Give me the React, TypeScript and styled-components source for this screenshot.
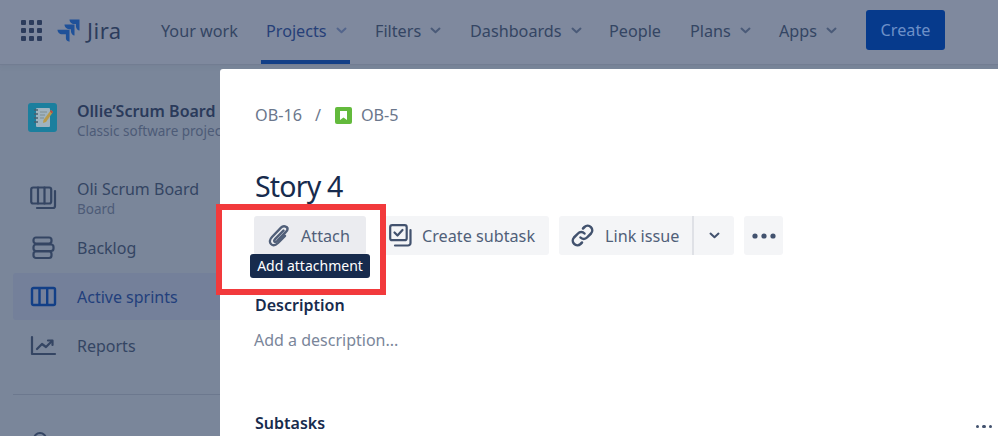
import React from "react";
import styled, { createGlobalStyle } from "styled-components";

const Global = createGlobalStyle`
  html, body { margin: 0; padding: 0; background: #7a869a; }
  * { box-sizing: border-box; }
`;

const Page = styled.div`
  position: relative;
  width: 998px;
  height: 436px;
  overflow: hidden;
  display: flex;
  flex-direction: column;
  font-family: "Noto Sans", "Open Sans", sans-serif;
  background: #7a869a;
`;

const Header = styled.header`
  height: 65px;
  flex: none;
  display: flex;
  align-items: flex-start;
  padding-left: 21px;
  background: #7f899e;
  border-bottom: 1px solid #727d92;
  box-shadow: 0 2px 3px #727d9266;
`;

const LogoRow = styled.div`
  display: flex;
  align-items: center;
  gap: 15px;
  width: 135px;
  height: 60px;
  flex: none;
`;

const Wordmark = styled.span`
  font-size: 22px;
  letter-spacing: 0.5px;
  color: #2c3c5c;
  margin-left: -8px;
`;

const Nav = styled.nav`
  display: flex;
  height: 64px;
  align-items: stretch;
`;

const NavItem = styled.div<{ $active?: boolean; $width: number }>`
  width: ${(p) => p.$width}px;
  padding: 1px 0 0 5px;
  display: flex;
  align-items: center;
  gap: 9px;
  font-size: 16.2px;
  white-space: nowrap;
  color: ${(p) => (p.$active ? "#263f78" : "#344563")};
  border-bottom: 4px solid ${(p) => (p.$active ? "#123f87" : "transparent")};
  margin-right: 20px;
`;

const CreateButton = styled.button`
  width: 79px;
  height: 40px;
  margin: 10px 0 0 5px;
  border: 0;
  border-radius: 3px;
  background: #063a8c;
  color: #6d90c8;
  font: 16.2px "Noto Sans", sans-serif;
`;

const Body = styled.div`
  flex: 1;
  display: flex;
  min-height: 0;
  padding-top: 4px;
`;

const Sidebar = styled.aside`
  width: 220px;
  flex: none;
  padding: 34px 0 0 13px;
  display: flex;
  flex-direction: column;
`;

const ProjectRow = styled.div`
  display: flex;
  align-items: flex-start;
  gap: 20px;
  padding-left: 15px;
  height: 29px;
  white-space: nowrap;
`;

const ProjectText = styled.div`
  display: flex;
  flex-direction: column;
  width: 143px;
  margin-top: -1px;
  overflow: hidden;
`;

const ProjectName = styled.div`
  font-size: 16px;
  line-height: 19px;
  font-weight: 600;
  color: #2a3a5a;
`;

const ProjectKind = styled.div`
  font-size: 13.5px;
  line-height: 20px;
  color: #4d5b77;
`;

const NavList = styled.div`
  margin-top: 41px;
  display: flex;
  flex-direction: column;
`;

const SideItem = styled.div<{ $active?: boolean; $height: number }>`
  height: ${(p) => p.$height}px;
  display: flex;
  align-items: center;
  gap: 20px;
  padding-left: 17px;
  color: ${(p) => (p.$active ? "#223f7c" : "#344563")};
  font-size: 16px;
  background: ${(p) => (p.$active ? "#74809a" : "transparent")};
  border-radius: 3px 0 0 3px;
`;

const SideStack = styled.div`
  display: flex;
  flex-direction: column;
`;

const SideLabel = styled.span`
  line-height: 22px;
`;

const SideSub = styled.span`
  font-size: 13.5px;
  line-height: 18px;
  color: #4d5b77;
`;

const SideDivider = styled.div`
  margin-top: 22px;
  height: 1px;
  background: #6c788e;
`;

const Modal = styled.main`
  flex: 1;
  background: #fff;
  border-radius: 3px 0 0 0;
  padding: 34px 0 0 35px;
  position: relative;
  display: flex;
  flex-direction: column;
`;

const Crumbs = styled.div`
  display: flex;
  align-items: center;
  font-size: 16.2px;
  height: 24px;
  color: #6b778c;
`;

const Slash = styled.span`
  margin: 0 14px 0 13px;
`;

const CrumbKey = styled.span`
  margin-left: 9px;
`;

const Title = styled.h1`
  margin: 39px 0 0;
  font-size: 28.5px;
  letter-spacing: -0.8px;
  line-height: 40px;
  font-weight: 400;
  color: #172b4d;
`;

const Actions = styled.div`
  display: flex;
  margin: 10px 0 0 -1px;
  height: 39px;
`;

const ActionButton = styled.div<{ $bg: string; $width: number; $gap?: number; $pad?: number; $after?: number }>`
  width: ${(p) => p.$width}px;
  height: 39px;
  background: ${(p) => p.$bg};
  border-radius: 3px;
  display: flex;
  align-items: center;
  justify-content: ${(p) => (p.$gap ? "flex-start" : "center")};
  padding-left: ${(p) => p.$pad ?? 0}px;
  gap: ${(p) => p.$gap ?? 0}px;
  font-size: 16.2px;
  color: #505f79;
  margin-right: ${(p) => p.$after ?? 10}px;
`;

const SplitLeft = styled(ActionButton)`
  margin-right: 0;
  border-radius: 3px 0 0 3px;
  border-right: 2px solid #dfe1e6;
`;

const SplitRight = styled(ActionButton)`
  border-radius: 0 3px 3px 0;
`;

const SectionTitle = styled.h2<{ $top: number }>`
  margin: ${(p) => p.$top}px 0 0;
  font-size: 16px;
  line-height: 22px;
  font-weight: 600;
  color: #172b4d;
`;

const Placeholder = styled.div`
  margin-top: 12px;
  margin-left: -1px;
  font-size: 16px;
  line-height: 24px;
  color: #7a869a;
`;

const Tooltip = styled.div`
  position: absolute;
  left: 250px;
  top: 254px;
  width: 120px;
  height: 24px;
  border-radius: 3px;
  background: #172b4d;
  color: #fff;
  font-size: 14px;
  line-height: 24px;
  text-align: center;
  white-space: nowrap;
`;

const Callout = styled.div`
  position: absolute;
  left: 216px;
  top: 204px;
  width: 170px;
  height: 91px;
  border: 6px solid #f23a3c;
  pointer-events: none;
`;

const Dots = styled.div`
  position: absolute;
  right: 6px;
  bottom: 8px;
  display: flex;
  gap: 3px;
`;

const Dot = styled.i`
  width: 3.5px;
  height: 3.5px;
  border-radius: 50%;
  background: #42526e;
`;

const PartialIcon = styled.div`
  position: absolute;
  left: 33px;
  top: 432px;
  width: 14px;
  height: 14px;
  border: 2px solid #344563;
  border-radius: 50%;
`;

const GridIcon = () => (
  <svg width="21" height="21" viewBox="0 0 21 21" fill="#2c3c5c">
    {[0, 8, 16].flatMap((y) =>
      [0, 8, 16].map((x) => <rect key={`${x}-${y}`} x={x} y={y} width="5" height="5" rx="1" />)
    )}
  </svg>
);

const JiraMark = () => (
  <svg width="23" height="23" viewBox="0 0 23 23" fill="#1f5199">
    <path d="M22.5 0.5H12.5c0 2.6 2.1 4.6 4.6 4.6h1.8v1.8c0 2.5 2 4.5 3.6 4.6z" />
    <path d="M17.5 5.6H7.5c0 2.6 2.1 4.6 4.6 4.6h1.8V12c0 2.5 2 4.5 3.6 4.6z" />
    <path d="M12.5 10.7H0.5c0 2.6 2.1 4.6 4.6 4.6h3.8v4c0 2.2 2 3.2 3.6 3.4z" />
  </svg>
);

const Chevron = ({ color = "#4a5a78", w = 11 }: { color?: string; w?: number }) => (
  <svg width={w} height={w * 0.65} viewBox="0 0 11 7" fill="none" stroke={color} strokeWidth="2" strokeLinecap="round" strokeLinejoin="round">
    <path d="M1.5 1.5 5.5 5.2 9.5 1.5" />
  </svg>
);

const ProjectAvatar = () => (
  <svg width="29" height="29" viewBox="0 0 29 29">
    <rect width="29" height="29" rx="3" fill="#1b7f9e" />
    <rect x="8" y="5" width="14" height="19" rx="1" fill="#9fb3bf" />
    <path d="M6 7h4M6 11h4M6 15h4M6 19h4" stroke="#49606f" strokeWidth="1.5" />
    <path d="M12 9h7M12 12h5M12 15h4" stroke="#7e8d8f" strokeWidth="1" />
    <path d="M23 7l2 2-7 10-3 1 .5-3z" fill="#b89a4a" />
    <path d="M23 7l2 2-1 1.500-2-2z" fill="#b5494a" />
  </svg>
);

const BoardIcon = ({ color = "#344563" }: { color?: string }) => (
  <svg width="27" height="24" viewBox="0 0 27 24" fill="none" stroke={color} strokeWidth="2.2" strokeLinejoin="round" strokeLinecap="round">
    <rect x="1.200" y="1.500" width="20" height="16" rx="2" />
    <path d="M8 1.500v16M14.500 1.500v16" />
    <path d="M25 5v15a2 2 0 0 1-2 2H7" />
  </svg>
);

const BacklogIcon = () => (
  <svg width="27" height="24" viewBox="0 0 27 24" fill="none" stroke="#344563" strokeWidth="2.2" strokeLinejoin="round">
    <rect x="3.500" y="1.500" width="18" height="6" rx="2.500" />
    <rect x="3.500" y="8.500" width="20" height="6.500" rx="2.500" />
    <rect x="3.500" y="15.500" width="18" height="6.500" rx="2.500" />
  </svg>
);

const SprintIcon = () => (
  <svg width="27" height="22" viewBox="0 0 27 22" fill="none" stroke="#123f87" strokeWidth="2.400" strokeLinejoin="round">
    <rect x="2" y="2" width="23" height="17" rx="1.500" />
    <path d="M9.500 2v17M17.200 2v17" />
  </svg>
);

const ReportsIcon = () => (
  <svg width="27" height="22" viewBox="0 0 27 22" fill="none" stroke="#344563" strokeWidth="2.200" strokeLinecap="round" strokeLinejoin="round">
    <path d="M2 2v17h23" />
    <path d="M7 14l5-5 4 3 6-6" />
    <path d="M18 5.500h4.500V10" />
  </svg>
);

const StoryIcon = () => (
  <svg width="17" height="17" viewBox="0 0 17 17">
    <rect width="17" height="17" rx="2" fill="#63ba3c" />
    <path d="M5 4h7v9l-3.500-2.500L5 13z" fill="#fff" />
  </svg>
);

const ClipIcon = () => (
  <svg width="22" height="24" viewBox="0 0 22 24" fill="none" stroke="#505f79" strokeWidth="2.400" strokeLinecap="round" strokeLinejoin="round">
    <path d="M19 3.500c-1.800-1.800-4.300-1.500-6 .2L4 13c-2.300 2.400-2.700 5.300-1 7 1.800 1.800 4.600 1.300 7-1l7-7.200" />
    <path d="M15.500 6.500 7 15.200c-.9 1-1 1.900-.5 2.400.6.600 1.500.4 2.500-.5l8.700-9c1.800-1.700 2.600-3 1.300-4.600" />
  </svg>
);

const SubtaskIcon = () => (
  <svg width="23" height="23" viewBox="0 0 23 23" fill="none" stroke="#42526e" strokeWidth="2.200" strokeLinecap="round" strokeLinejoin="round">
    <rect x="1.200" y="1.200" width="16.500" height="15" rx="2" />
    <path d="M5.500 8.500l3 3 5-5.500" />
    <path d="M21.500 6v13a2.500 2.500 0 0 1-2.500 2.500H6" />
  </svg>
);

const LinkIcon = () => (
  <svg width="23" height="23" viewBox="0 0 23 23" fill="none" stroke="#42526e" strokeWidth="2.500" strokeLinecap="round" strokeLinejoin="round">
    <path d="M9.500 13.500a4.500 4.500 0 0 0 6.500 0l4-4a4.600 4.600 0 0 0-6.500-6.500l-1.500 1.500" />
    <path d="M13.500 9.500a4.500 4.500 0 0 0-6.500 0l-4 4a4.600 4.600 0 0 0 6.500 6.500l1.500-1.500" />
  </svg>
);

const MoreIcon = () => (
  <svg width="24" height="6" viewBox="0 0 24 6" fill="#42526e">
    <circle cx="3" cy="3" r="2.600" />
    <circle cx="12" cy="3" r="2.600" />
    <circle cx="21" cy="3" r="2.600" />
  </svg>
);

export default function App() {
  return (
    <Page>
      <Global />
      <Header>
        <LogoRow>
          <GridIcon />
          <JiraMark />
          <Wordmark>Jira</Wordmark>
        </LogoRow>
        <Nav>
          <NavItem $width={85}>Your work</NavItem>
          <NavItem $active $width={89}>
            Projects <Chevron color="#53658c" />
          </NavItem>
          <NavItem $width={75}>
            Filters <Chevron />
          </NavItem>
          <NavItem $width={119}>
            Dashboards <Chevron />
          </NavItem>
          <NavItem $width={61}>People</NavItem>
          <NavItem $width={69}>
            Plans <Chevron />
          </NavItem>
          <NavItem $width={67}>
            Apps <Chevron />
          </NavItem>
        </Nav>
        <CreateButton>Create</CreateButton>
      </Header>
      <Body>
        <Sidebar>
          <ProjectRow>
            <ProjectAvatar />
            <ProjectText>
              <ProjectName>Ollie’Scrum Board</ProjectName>
              <ProjectKind>Classic software project</ProjectKind>
            </ProjectText>
          </ProjectRow>
          <NavList>
            <SideItem $height={49}>
              <BoardIcon />
              <SideStack>
                <SideLabel>Oli Scrum Board</SideLabel>
                <SideSub>Board</SideSub>
              </SideStack>
            </SideItem>
            <SideItem $height={51}>
              <BacklogIcon />
              Backlog
            </SideItem>
            <SideItem $active $height={47}>
              <SprintIcon />
              Active sprints
            </SideItem>
            <SideItem $height={52}>
              <ReportsIcon />
              Reports
            </SideItem>
          </NavList>
          <SideDivider />
        </Sidebar>
        <Modal>
          <Crumbs>
            OB-16
            <Slash>/</Slash>
            <StoryIcon />
            <CrumbKey>OB-5</CrumbKey>
          </Crumbs>
          <Title>Story 4</Title>
          <Actions>
            <ActionButton $bg="#ebecf0" $width={112} $gap={11} $pad={14} $after={15}>
              <ClipIcon />
              Attach
            </ActionButton>
            <ActionButton $bg="#f4f5f7" $width={168} $gap={10} $pad={8}>
              <SubtaskIcon />
              Create subtask
            </ActionButton>
            <SplitLeft $bg="#f4f5f7" $width={135} $gap={11} $pad={12}>
              <LinkIcon />
              Link issue
            </SplitLeft>
            <SplitRight $bg="#f4f5f7" $width={40}>
              <Chevron color="#42526e" />
            </SplitRight>
            <ActionButton $bg="#f4f5f7" $width={39}>
              <MoreIcon />
            </ActionButton>
          </Actions>
          <SectionTitle $top={39}>Description</SectionTitle>
          <Placeholder>Add a description...</Placeholder>
          <SectionTitle $top={60}>Subtasks</SectionTitle>
          <Dots>
            <Dot />
            <Dot />
            <Dot />
          </Dots>
        </Modal>
      </Body>
      <PartialIcon />
      <Tooltip>Add attachment</Tooltip>
      <Callout />
    </Page>
  );
}
